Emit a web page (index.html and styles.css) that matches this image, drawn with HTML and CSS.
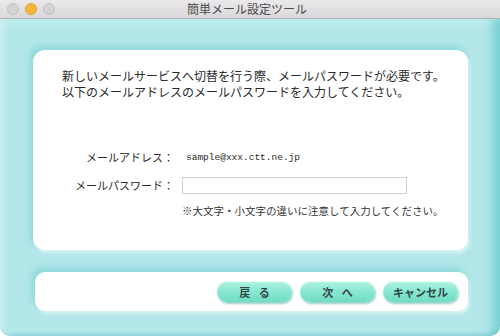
FILE: index.html
```html
<!DOCTYPE html>
<html lang="ja">
<head>
    <meta charset="UTF-8">
    <title>簡単メール設定ツール</title>
    <link rel="stylesheet" href="styles.css">
</head>
<body>
    <div class="window">
        <div class="titlebar">
            <div class="lights">
                <span class="light"></span>
                <span class="light orange"></span>
                <span class="light"></span>
            </div>
            <div class="title">簡単メール設定ツール</div>
        </div>
        <div class="frame">
            <div class="panel main-panel">
                <p class="intro">新しいメールサービスへ切替を行う際、メールパスワードが必要です。<br>以下のメールアドレスのメールパスワードを入力してください。</p>
                <div class="form">
                    <div class="row">
                        <span class="label">メールアドレス：</span>
                        <span class="address">sample@xxx.ctt.ne.jp</span>
                    </div>
                    <div class="row">
                        <span class="label">メールパスワード：</span>
                        <input type="password" class="password">
                    </div>
                    <div class="row note-row">
                        <span class="label"></span>
                        <span class="note">※大文字・小文字の違いに注意して入力してください。</span>
                    </div>
                </div>
            </div>
            <div class="panel button-panel">
                <button class="btn spaced">戻 る</button>
                <button class="btn spaced">次 へ</button>
                <button class="btn">キャンセル</button>
            </div>
        </div>
    </div>
</body>
</html>
```

FILE: styles.css
```css
body {
    margin: 0;
    background: #ffffff;
    font-family: "Noto Sans CJK JP", "Noto Sans", sans-serif;
    color: #2a2a2a;
}
.window {
    width: 500px;
    height: 336px;
    display: flex;
    flex-direction: column;
    overflow: hidden;
}
.titlebar {
    height: 18px;
    flex-shrink: 0;
    display: flex;
    align-items: center;
    background: linear-gradient(to bottom, #ebe9eb, #d9d7d9);
    border-bottom: 1px solid #b4b2b4;
    position: relative;
}
.lights {
    display: flex;
    gap: 6px;
    padding-left: 7px;
}
.light {
    width: 12px;
    height: 12px;
    border-radius: 50%;
    background: #d4d2d4;
    border: 1px solid #c0bec0;
    box-sizing: border-box;
}
.light.orange {
    background: #f7b73f;
    border-color: #e6a22e;
}
.title {
    position: absolute;
    left: 0;
    right: 6px;
    text-align: center;
    font-size: 12px;
    color: #4a4a4a;
    line-height: 18px;
}
.frame {
    flex: 1;
    display: flex;
    flex-direction: column;
    padding: 31px 32px 0 33px;
    background: linear-gradient(to bottom, #c2eef0 0px, #b3e7ea 10px, #b3e7ea 100%);
    border-radius: 0 0 10px 10px;
    box-shadow: inset 6px 0 6px -2px rgba(255, 255, 255, 0.35), inset -12px 0 8px -4px rgba(90, 195, 200, 0.6), inset 0 -3px 3px -1px rgba(90, 190, 195, 0.5);
}
.panel {
    background: #ffffff;
    box-shadow: -3px -4px 6px rgba(95, 195, 200, 0.45), 2px 3px 3px rgba(255, 255, 255, 0.5);
}
.main-panel {
    height: 200px;
    border-radius: 12px;
    padding: 18px 0 0 29px;
    box-sizing: border-box;
}
.intro {
    margin: 0;
    font-size: 12px;
    line-height: 16px;
}
.form {
    margin-top: 48px;
    display: flex;
    flex-direction: column;
}
.row {
    display: flex;
    align-items: center;
    height: 18px;
    margin-bottom: 10px;
}
.label {
    width: 112px;
    text-align: right;
    font-size: 11px;
    flex-shrink: 0;
    padding-right: 8px;
}
.address {
    font-family: "Liberation Mono", "DejaVu Sans Mono", monospace;
    font-size: 9.5px;
    padding-left: 4px;
}
.password {
    width: 225px;
    height: 17px;
    box-sizing: border-box;
    border: 1px solid #cfcfcf;
    margin: 0;
    padding: 0 3px;
    background: #fff;
}
.note-row {
    margin-top: -3px;
}
.note {
    font-size: 10.5px;
    color: #333;
}
.button-panel {
    margin-top: 22px;
    margin-left: 2px;
    height: 39px;
    border-radius: 10px;
    display: flex;
    justify-content: flex-end;
    align-items: center;
    gap: 8px;
    padding-right: 10px;
    box-sizing: border-box;
}
.btn {
    width: 75px;
    height: 21px;
    border: none;
    border-radius: 10px;
    padding: 0;
    font-family: "Noto Sans CJK JP", sans-serif;
    font-size: 11px;
    font-weight: bold;
    color: #30464a;
    background: linear-gradient(to bottom, #b2f3e2 0%, #8ce8d2 45%, #6fdcc2 100%);
    box-shadow: 1px 2px 2px rgba(70, 170, 160, 0.55), inset 0 1px 1px rgba(255, 255, 255, 0.8);
    cursor: pointer;
}
.btn.spaced {
    word-spacing: 6px;
}
```
